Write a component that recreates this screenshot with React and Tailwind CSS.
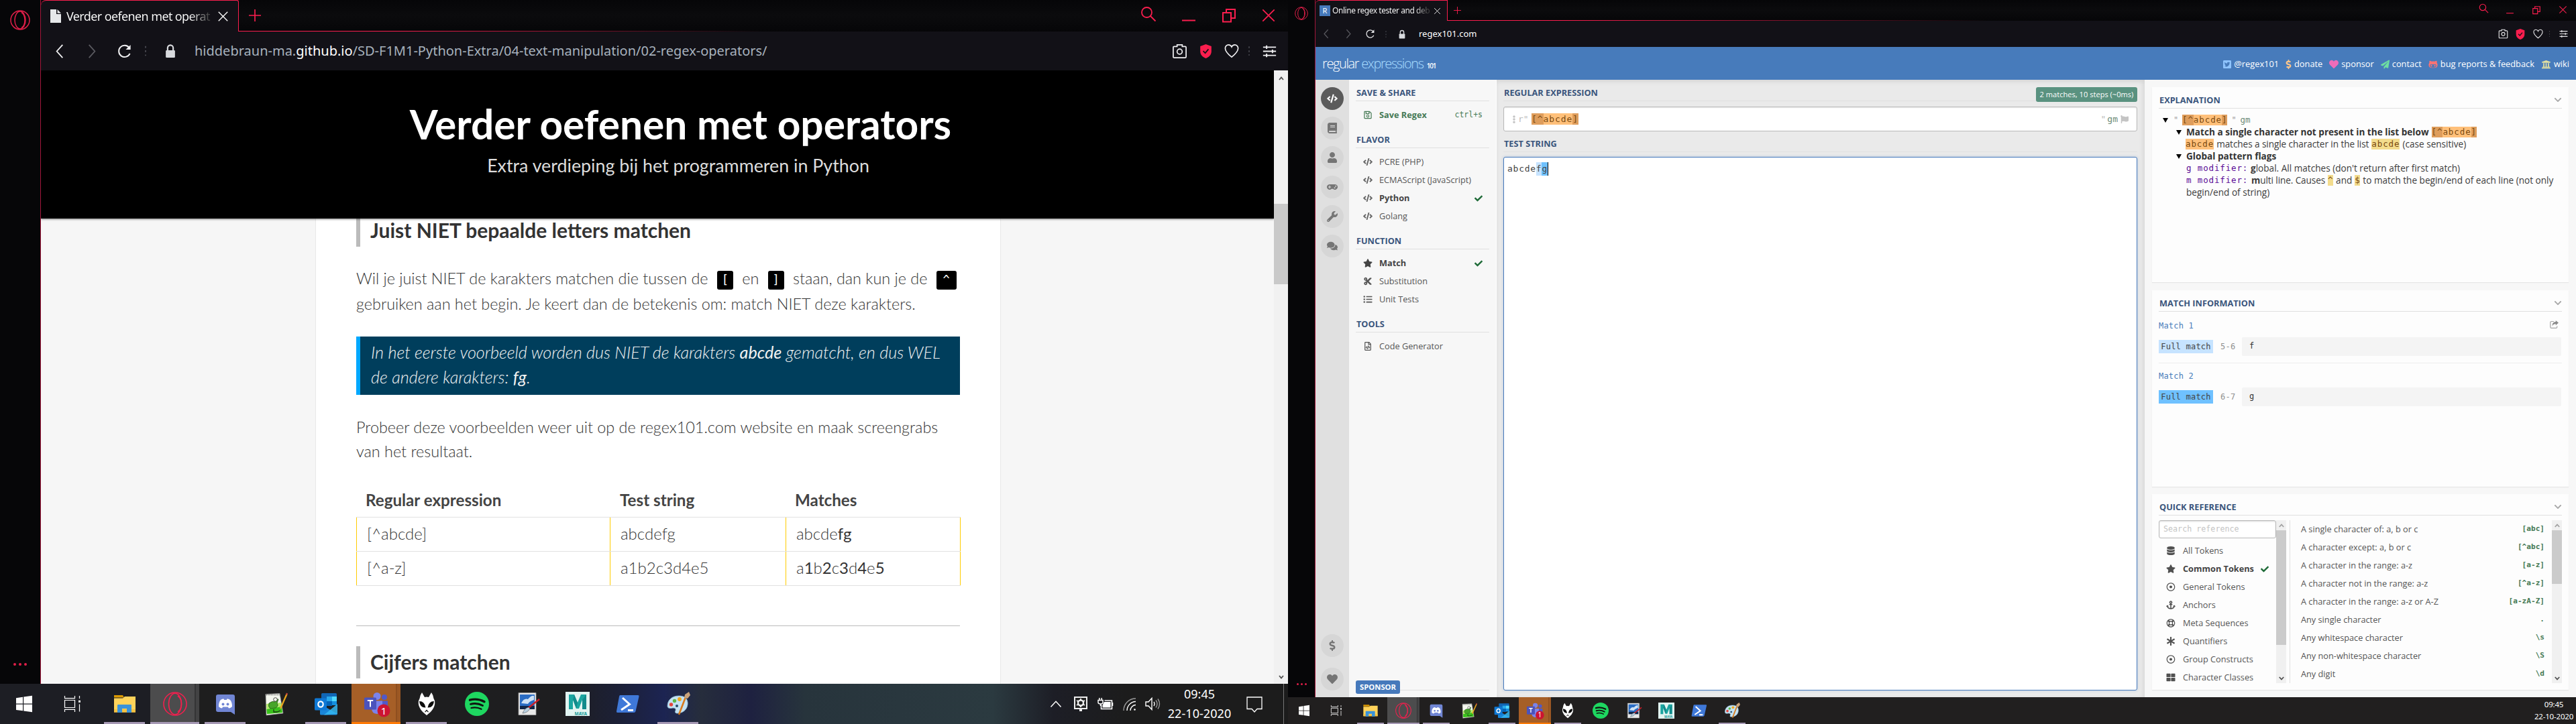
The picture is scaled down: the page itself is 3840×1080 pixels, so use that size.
import React from "react";
import {
  FaCode, FaBook, FaUser, FaGamepad, FaWrench, FaComments, FaDollarSign, FaHeart, FaStar, FaCut,
  FaListUl, FaCheck, FaDatabase, FaAnchor, FaRegDotCircle, FaRegLifeRing, FaAsterisk, FaThLarge,
  FaRegSave, FaRegFileCode, FaTwitterSquare, FaPaperPlane, FaUniversity, FaFlag,
  FaEllipsisV, FaChevronDown, FaGithubAlt,
} from "react-icons/fa";

const UI = "font-['Noto_Sans','Open_Sans',sans-serif]";
const MONO = "font-['DejaVu_Sans_Mono','Liberation_Mono',monospace]";

/* ---------- browser chrome icons ---------- */

const Svg = ({ className, box = 24, children, sw = 1.5, color = "currentColor" }) => (
  <svg className={`shrink-0 ${className}`} viewBox={`0 0 ${box} ${box}`} fill="none" stroke={color} strokeWidth={sw}>
    {children}
  </svg>
);

const OperaOutline = ({ className }) => (
  <Svg className={className} box={30} color="#e01f49" sw={1.5}>
    <ellipse cx="15" cy="15" rx="14" ry="14" />
    <ellipse cx="15" cy="15" rx="8" ry="13" />
    <path d="M17 3.500c3.500 2 5 6 5 11.500s-1.500 9.500-5 11.500" />
  </Svg>
);
const Back = ({ className }) => (
  <Svg className={className} sw={1.9}><path d="M17 2 8 12l9 10" /></Svg>
);
const Forward = ({ className }) => (
  <Svg className={className} sw={1.9}><path d="M7 2l9 10-9 10" /></Svg>
);
const Reload = ({ className }) => (
  <Svg className={className} sw={2.1}>
    <path d="M20.500 15.500A9 9 0 1 1 19.500 6.500" />
    <path d="M21.500 2v7.500H14z" fill="currentColor" stroke="none" />
  </Svg>
);
const Dots = ({ className }) => (
  <Svg className={className} color="#4a4a52"><path d="M12 4v16" strokeDasharray="3 4" strokeWidth="2" /></Svg>
);
const Lock = ({ className }) => (
  <Svg className={className} sw={2.4} color="#d8dade">
    <path d="M7.500 12V7a4.500 4.500 0 0 1 9 0v5" />
    <rect x="4.500" y="11" width="15" height="12" rx="1.500" fill="#d8dade" stroke="none" />
  </Svg>
);
const Search = ({ className }) => (
  <Svg className={className} sw={1.8}><circle cx="9.500" cy="9.500" r="7.500" /><path d="M15 15l7.500 7.500" /></Svg>
);
const Minimize = ({ className }) => (
  <Svg className={className} sw={2}><path d="M2 21.500h20" /></Svg>
);
const Restore = ({ className }) => (
  <Svg className={className} sw={2}><path d="M3 8h12v13.500H3zM8 8V3h13v13h-6" /></Svg>
);
const Close = ({ className }) => (
  <Svg className={className} sw={1.9}><path d="M2.500 2.500l19 19M21.500 2.500l-19 19" /></Svg>
);
const Camera = ({ className }) => (
  <Svg className={className} sw={1.8}>
    <path d="M8 4.500V2h8v2.500h4.500q1.500 0 1.500 1.500v14.500q0 1.500-1.500 1.500h-17Q2 22 2 20.500V6q0-1.500 1.500-1.500z" />
    <circle cx="12" cy="12.500" r="4" />
  </Svg>
);
const Shield = ({ className }) => (
  <Svg className={className} sw={2}>
    <path d="M12 0l9.500 3.500V12c0 6-4 10-9.500 12C6.500 22 2.500 18 2.500 12V3.500z" fill="#fa1e4e" stroke="none" />
    <path d="M7.500 11.500l3.500 3.500 5.500-6.500" stroke="#121117" />
  </Svg>
);
const HeartLine = ({ className }) => (
  <Svg className={className} sw={1.8}>
    <path d="M12 22C6 17 1.500 12.500 1.500 7.500 1.500 4.500 4 2 6.800 2 9 2 11 3 12 5.500 13 3 15 2 17.200 2 20 2 22.500 4.500 22.500 7.500c0 5-4.500 9.500-10.500 14.500z" />
  </Svg>
);
const Sliders = ({ className }) => (
  <Svg className={className} sw={2.2}>
    <path d="M1 5h22M1 12h22M1 19h22M7 2v6M17 9v6M7 16v6" />
  </Svg>
);

/* ---------- taskbar icons ---------- */

const I = ({ className, children }) => (
  <svg className={`shrink-0 overflow-visible ${className}`} viewBox="0 0 36 36" fill="none">{children}</svg>
);
const WinLogo = (p) => (
  <I {...p}><path fill="#fff" d="M6 9.200 16 7.800v9.700H6zM17.200 7.600 30 5.800v11.700H17.200zM6 18.700h10v9.600L6 27zM17.200 18.700H30V30.200l-12.800-1.800z" /></I>
);
const TaskView = (p) => (
  <I {...p}>
    <path stroke="#fff" strokeWidth="1.200" d="M6.500 6v3.600h15V6M6.500 12.500h15v11h-15zM6.500 30v-3.600h15V30M28.500 6v4M28.500 18.500v11" />
    <path fill="#fff" d="M27 12.800h3v3h-3z" />
  </I>
);
const Folder = (p) => (
  <I {...p}>
    <path fill="#dd9a00" d="M2 5h13l2 3.500H2z" />
    <path fill="#ffd35a" d="M2 9.500h13l3-2.500h16v23.500H2z" />
    <path fill="#f7c241" d="M2 26h32v4.500H2z" />
    <path fill="#3a93da" d="M7 31V20q0-1 1-1h19q1 0 1 1v11h-7v-6h-7v6z" />
  </I>
);
const OperaGX = (p) => (
  <I {...p}>
    <g stroke="#f0204e" strokeWidth="1.600">
      <circle cx="18" cy="18" r="17" />
      <ellipse cx="18" cy="18" rx="9.500" ry="15.800" />
      <path d="M22 6c4 3 5.500 7 5.500 12S26 27 22 30" />
    </g>
  </I>
);
const Discord = (p) => (
  <I {...p}>
    <path fill="#7186d4" d="M7 4h22q3 0 3 3v27l-6-4H7q-3 0-3-3V7q0-3 3-3z" />
    <path fill="#fff" d="M8 22c0-5 1-8 3-10 2-1 3-1.300 4.500-1.400l.7 1.300h3.600l.7-1.300c1.500.1 2.500.4 4.500 1.400 2 2 3 5 3 10-1.500 1.800-3 2.300-5 2.500l-1.200-2H14.200l-1.200 2c-2-.2-3.500-.7-5-2.500z" />
    <circle cx="14.500" cy="18.500" r="2" fill="#7186d4" /><circle cx="21.500" cy="18.500" r="2" fill="#7186d4" />
  </I>
);
const NotepadPP = (p) => (
  <I {...p}>
    <path fill="#f4f6ee" stroke="#8a8a8a" strokeWidth=".7" d="M3 3.500l21-1 5 29.500-25 3z" />
    <path stroke="#555" strokeWidth="1.500" strokeDasharray="1 1.300" d="M4 4.500h20" />
    <path fill="#b4ea6c" d="M4 18l22-2 2 15-23 2z" />
    <path fill="#39c21c" d="M4.500 26l22.500-4 1 9-23 2z" />
    <path fill="#47a52a" stroke="#1c4c10" strokeWidth=".7" d="M8 17q5-4 9-2l2-4h3l-2 6q3 4-2 7l-8 1q-4-3-2-8z" />
    <circle cx="17.500" cy="11.500" r="2.800" fill="#f4f6ee" stroke="#222" strokeWidth=".8" />
    <path stroke="#1b3c12" strokeWidth="1.300" d="M15 26v4h5l5-2" />
    <path stroke="#e8a51c" strokeWidth="2.300" d="M34.500 3.500 25 25" /><path stroke="#c4443a" strokeWidth="2.300" d="M35 2l-1 2.500" />
  </I>
);
const Outlook = (p) => (
  <I {...p}>
    <path fill="#1066b5" d="M11 3.500q0-1.500 1.500-1.500h20q1.500 0 1.500 1.500V20H11z" />
    <path fill="#28a8ea" d="M19 7h8v7h-8z" /><path fill="#50d9ff" d="M27 7h7v7h-7z" />
    <path fill="#0364b8" d="M19 14h8v7h-8z" /><path fill="#1490df" d="M27 14h7v6h-7z" />
    <path fill="#1a86d9" d="M9 18l26 15q-.5 1.500-2 1.500H10.500Q9 34.500 9 33z" />
    <path fill="#35b8f1" d="M35 18v15L15 34.500z" opacity=".85" />
    <rect x="1" y="9.500" width="18" height="18" rx="1.500" fill="#0f78d4" />
    <ellipse cx="10" cy="18.500" rx="3.700" ry="4.200" stroke="#fff" strokeWidth="2.200" />
  </I>
);
const Teams = (p) => (
  <I {...p}>
    <circle cx="19" cy="6.500" r="5.500" fill="#7b83eb" /><circle cx="30" cy="8" r="4" fill="#5059c9" />
    <path fill="#5059c9" d="M24 13.500h11v9q0 5-6 5.500z" />
    <path fill="#7b83eb" d="M11 13.500h16v11q0 8-8 8.500-8-.5-8-8.500z" />
    <rect x="0" y="8.500" width="18" height="18" rx="1.500" fill="#4b53bc" />
    <path stroke="#fff" strokeWidth="2" d="M4.800 13h8.400M9 13v9.500" />
    <circle cx="29" cy="28" r="9.500" fill="#cc1432" />
    <text x="29" y="33.500" fontSize="15" fill="#fff" textAnchor="middle" fontFamily="Noto Sans, sans-serif">1</text>
  </I>
);
const Foobar = (p) => (
  <I {...p}>
    <path fill="#fff" d="M11 1l4 7q3-1 6 0l4-7q3 4 3.500 9 3 5 1 11-2.500 7-8 11L18 35l-3.500-3Q9 28 6.500 21q-2-6 1-11Q8 5 11 1z" />
    <path fill="#0c0c0c" d="M7 14q8 0 9.500 9.500Q8 24 7 14zM29 14q-8 0-9.500 9.500Q28 24 29 14zM15 30l3-3.500 3 3.500-1 .5-2-2-2 2z" />
  </I>
);
const Spotify = (p) => (
  <I {...p}>
    <circle cx="18" cy="18" r="18" fill="#1ed760" />
    <path stroke="#101410" strokeLinecap="round" strokeWidth="3.400" d="M7.500 12.200q11-3 21.500 2.500" />
    <path stroke="#101410" strokeLinecap="round" strokeWidth="2.900" d="M8.500 18.300q9.500-2.500 18 2.200" />
    <path stroke="#101410" strokeLinecap="round" strokeWidth="2.300" d="M9.500 24q8-2 15 1.800" />
  </I>
);
const PaintNet = (p) => (
  <I {...p}>
    <path fill="#e8e8e8" stroke="#9a9a9a" strokeWidth=".8" d="M5 1.500h26v33H5z" />
    <path fill="#2a6cc4" d="M7 4h22v17H7z" /><path fill="#cfe2f5" d="M9 17q4-8 10-6 5-6 9-5v6q-7 2-9 6z" />
    <path fill="#102648" d="M7 21h22v5H7z" />
    <path stroke="#c81e28" strokeWidth="2.400" d="M36 11 19 24.500" /><path fill="#b8cfe0" stroke="#555" strokeWidth=".6" d="M20 23q-6 1-9 9 8-1 11-7z" />
  </I>
);
const Maya = (p) => (
  <I {...p}>
    <path fill="#e2f4f1" d="M0 0h36v36H0z" />
    <path fill="#1aa5a0" d="M5 4h8l5 12 5-12h8v22h-6V12l-5 13h-4l-5-13v14H5z" />
    <path fill="#0c7c7e" d="M13 4l5 12-2 9-5-13zM31 4v22h-6V12z" opacity=".6" />
    <text x="32" y="34.500" fontSize="6.500" fontWeight="700" fill="#159a98" textAnchor="end" fontFamily="Noto Sans, sans-serif">MAYA</text>
  </I>
);
const PowerShell = (p) => (
  <I {...p}>
    <path fill="#3f78d8" d="M6.500 5H33q2 0 1.500 2l-5 22q-.5 2-2.500 2H2.500Q.5 31 1 29l4-22q.4-2 1.500-2z" />
    <path stroke="#fff" strokeWidth="3" d="M10 9l10.500 9.500L8 27M18 27.500h8" />
  </I>
);
const Paint = (p) => (
  <I {...p}>
    <path fill="#c4e2f2" stroke="#8ab8d4" strokeWidth=".8" d="M19 6c9 0 14 5 13 13-1 9-9 13-15 13-4 0-4-2-3-4 1-3-1-4-4-4-4 1-8 1-8-3C2 12 9 6 19 6z" />
    <circle cx="7.500" cy="19" r="2.700" fill="#e2453c" /><circle cx="12.500" cy="13.500" r="2.700" fill="#5fb947" />
    <circle cx="20" cy="11" r="2.900" fill="#f0a820" /><circle cx="16" cy="21" r="2" fill="#24486a" />
    <path stroke="#d87a1c" strokeWidth="2.600" d="M29 8 19 34" /><path fill="#c9a27a" d="M27 9l1-5 6-4 2 5-4 5z" />
  </I>
);

const TASKS = [
  { Icon: Folder, state: "open" },
  { Icon: OperaGX, state: "active" },
  { Icon: Discord, state: "open" },
  { Icon: NotepadPP },
  { Icon: Outlook, state: "open" },
  { Icon: Teams, state: "alert" },
  { Icon: Foobar, state: "open" },
  { Icon: Spotify },
  { Icon: PaintNet },
  { Icon: Maya },
  { Icon: PowerShell },
  { Icon: Paint, state: "open" },
];

function TaskButton({ Icon, state, big }) {
  const bg =
    state === "active" ? "bg-[linear-gradient(90deg,#4c4c4d_91%,#343435_91%,#343435_93%,#434344_93%)]"
    : state === "alert" ? "bg-[linear-gradient(90deg,#a65f27_91%,#8f4f1f_91%,#8f4f1f_93%,#9c5824_93%)]" : "";
  const full = state === "active" || state === "alert";
  const bar = state === "alert" ? "bg-[#ff7a05]" : state ? "bg-[#a699b5]" : "bg-transparent";
  const barW = full ? "w-full" : big ? "w-[61px]" : "w-10";
  return (
    <div className={big ? "w-[75px] px-px h-full" : "w-[49px] pl-px h-full"}>
      <div className={`h-full flex flex-col items-center ${bg}`}>
        <div className="flex-1 flex items-center">
          <Icon className={big ? "size-9 mt-[3px]" : "size-6 mt-[2px]"} />
        </div>
        <div className={`${barW} ${bar} ${big ? "h-[3px]" : "h-[2px]"}`} />
      </div>
    </div>
  );
}

function TaskIcons({ big }) {
  const cell = big ? "w-[72px] flex justify-center" : "w-12 flex justify-center";
  const size = big ? "size-9" : "size-6";
  return (
    <div className="flex h-full items-center">
      <div className={cell}><WinLogo className={size} /></div>
      <div className={cell}><TaskView className={size} /></div>
      <div className={big ? "flex h-full pl-1" : "flex h-full pl-0.5"}>
        {TASKS.map((t, i) => <TaskButton key={i} {...t} big={big} />)}
      </div>
    </div>
  );
}

/* ---------- left monitor ---------- */

function Code({ wide, children }) {
  return (
    <span className={`inline-block ${wide ? "w-[30px]" : "w-6"} h-7 mx-[7px] rounded-[3px] bg-black text-white text-center align-[1.5px] text-[17px] leading-[27px] ${MONO}`}>
      {children}
    </span>
  );
}

function H2({ children, className = "" }) {
  return (
    <h2 className={`h-12 leading-[47px] border-l-[6px] border-[#bbb] pl-[15px] text-[30px] font-bold text-[#333] whitespace-nowrap ${className}`}>
      {children}
    </h2>
  );
}

function LeftArticle() {
  const row = "grid grid-cols-[378px_262px_261px] h-[51px] border-t border-[#e1e1e1] text-2xl leading-[48px]";
  const td = "border-l border-[#ffcc00] pl-[15px]";
  return (
    <article className="w-[1022px] h-full bg-white border-x border-[#e9e9e9] px-[60px] text-[#333] font-light text-[23.4px] whitespace-nowrap">
      <H2 className="-mt-[6px]">Juist NIET bepaalde letters matchen</H2>
      <p className="mt-[29px] leading-[37.5px]">
        <span className="block h-[37.5px]">
          Wil je juist NIET de karakters matchen die tussen de <Code>[</Code> en <Code>]</Code> staan, dan kun je de <Code wide>^</Code>
        </span>
        gebruiken aan het begin. Je keert dan de betekenis om: match NIET deze karakters.
      </p>
      <blockquote className="mt-[30px] h-[87px] w-[900px] border-l-[6px] border-[#00a8ff] bg-[#003e5c] pl-4 pt-[5px] text-[25.2px] leading-[37px] italic text-[#f2f2f2]">
        In het eerste voorbeeld worden dus NIET de karakters <b>abcde</b> gematcht, en dus WEL<br />
        de andere karakters: <b>fg</b>.
      </blockquote>
      <p className="mt-[29.5px] leading-[36.3px]">
        Probeer deze voorbeelden weer uit op de regex101.com website en maak screengrabs<br />
        van het resultaat.
      </p>
      <div className="mt-[32px] w-[901px]">
        <div className="grid grid-cols-[378px_262px_261px] h-12 leading-[46px] text-[24.2px] font-bold text-[#444]">
          <div className="pl-[14px]">Regular expression</div>
          <div className="pl-[15px]">Test string</div>
          <div className="pl-[14px]">Matches</div>
        </div>
        <div className={row}>
          <div className={td}>[^abcde]</div>
          <div className={td}>abcdefg</div>
          <div className={`${td} border-r`}>abcde<b>fg</b></div>
        </div>
        <div className={row}>
          <div className={td}>[^a-z]</div>
          <div className={td}>a1b2c3d4e5</div>
          <div className={`${td} border-r`}>a<b>1</b>b<b>2</b>c<b>3</b>d<b>4</b>e<b>5</b></div>
        </div>
        <div className="h-px bg-[#e1e1e1]" />
      </div>
      <div className="mt-[59px] h-px w-[900px] bg-[#bbb]" />
      <H2 className="mt-[30px]">Cijfers matchen</H2>
    </article>
  );
}

function LeftMonitor() {
  return (
    <section className="w-[1920px] h-[1080px] flex flex-col">
      <div className="flex h-[1020px] bg-[#060608]">
        <aside className="w-[61px] shrink-0 border-r border-[#a1163a] flex flex-col items-center justify-between pt-[15px] pb-[27px]">
          <OperaOutline className="size-[30px]" />
          <div className="flex gap-1">
            <i className="size-1 rounded-full bg-[#e01f49]" /><i className="size-1 rounded-full bg-[#e01f49]" /><i className="size-1 rounded-full bg-[#e01f49]" />
          </div>
        </aside>
        <div className="flex-1 flex flex-col">
          <header className="flex h-[47px] bg-[linear-gradient(180deg,#060608,#0b0b0d_50%,#060608)]">
            <div className="w-[295px] h-full bg-[#121117] border-t border-r border-[#fa1e4e] rounded-tl-lg rounded-tr-[3px] flex items-center pl-[14px]">
              <svg className="w-4 h-5 shrink-0" viewBox="0 0 16 20"><path fill="#e6e8ea" d="M0 0h9v7h7v13H0zM10.500 0L16 5.700h-5.500z" /></svg>
              <div className={`ml-[8px] w-[216px] text-lg tracking-[-0.62px] whitespace-nowrap overflow-hidden text-transparent bg-clip-text bg-[linear-gradient(90deg,#fff_85%,#444_98%)] ${UI}`}>
                Verder oefenen met operat
              </div>
              <Close className="size-[17px] ml-[9px] text-white" />
            </div>
            <div className="flex-1 flex flex-col">
              <div className="h-[46px] flex items-center text-[#fa1e4e]">
                <Svg className="size-[18px] ml-[15px]" sw={2.2}><path d="M12 0v24M0 12h24" /></Svg>
                <div className="ml-auto flex gap-[36px] pr-[18px]">
                  <Search className="size-6 -mt-[2px]" />
                  <Minimize className="size-6 -mt-[2px]" />
                  <Restore className="size-6" />
                  <Close className="size-[22px] mt-px" />
                </div>
              </div>
              <div className="h-px bg-[linear-gradient(90deg,#fa1e4e,#fa1e4e_15%,transparent_50%)]" />
            </div>
          </header>
          <nav className="h-[58px] bg-[#121117] flex items-center text-[#f0f0f2]">
            <Back className="size-[23px] ml-4" />
            <Forward className="size-[23px] ml-[26px] text-[#5a5a60]" />
            <Reload className="size-[23px] ml-[25px]" />
            <Dots className="size-[22px] ml-[9px]" />
            <Lock className="size-[22px] ml-[15px]" />
            <div className={`ml-[25px] text-xl text-[#a7b1bd] ${UI}`}>
              hiddebraun-ma.<span className="text-white">github.io</span>/SD-F1M1-Python-Extra/04-text-manipulation/02-regex-operators/
            </div>
            <div className="ml-auto flex items-center pr-[17px]">
              <Camera className="size-[23px]" />
              <Shield className="size-[21px] ml-[17px]" />
              <HeartLine className="size-[22px] ml-[17px]" />
              <Dots className="size-[20px] ml-[5px]" />
              <Sliders className="size-[21px] ml-[10px]" />
            </div>
          </nav>
          <div className="flex h-[915px] font-[Lato,sans-serif]">
            <div className="w-[1838px] h-full flex flex-col overflow-hidden bg-[#f6f6f6]">
              <div className="h-[221px] shrink-0 bg-black text-white text-center pt-11 pl-[69px] shadow-[0_1px_3px_rgba(0,0,0,0.5)] z-10">
                <h1 className="text-[60.4px] leading-[72px] font-bold">Verder oefenen met operators</h1>
                <p className="mt-[9px] -ml-[7px] text-[26.8px] leading-[34px] text-[#ddd]">Extra verdieping bij het programmeren in Python</p>
              </div>
              <div className="h-[694px] overflow-hidden flex justify-center pl-[2px]"><LeftArticle /></div>
            </div>
            <div className="w-[21px] bg-[#f1f1f1] flex flex-col items-center">
              <svg className="size-2 mt-[8px]" viewBox="0 0 8 8" fill="none" stroke="#505050" strokeWidth="1.800"><path d="M1 6l3-3.500L7 6" /></svg>
              <div className="mt-[183px] w-full h-[120px] bg-[#c9c9c9]" />
              <svg className="size-2 mt-auto mb-[6px]" viewBox="0 0 8 8" fill="none" stroke="#505050" strokeWidth="1.800"><path d="M1 2l3 3.500L7 2" /></svg>
            </div>
          </div>
        </div>
      </div>
      <footer className="h-[60px] flex justify-between bg-[linear-gradient(90deg,#1d1e24_0,#1d1e24_220px,#1e1e1e_300px,#1e1e20_840px,#1c2036_920px,#1c2452_990px,#262d3c_1045px,#1e2140_1120px,#27343c_1200px,#2b3a40_1480px,#1d1e26_1570px,#1c1c1c_1680px)]">
        <TaskIcons big />
        <div className="flex items-center text-white">
          <Svg className="size-[18px]" sw={2}><path d="M2 18 12 7l10 11" /></Svg>
          <svg className="w-[22px] h-[22px] ml-[17px]" viewBox="0 0 22 22" fill="none">
            <path fill="#eee" d="M1 0h20v19h-8v3H9v-3H1z" />
            <path fill="#222" d="M3 2h16v15H3z" />
            <circle cx="11" cy="9.500" r="4" stroke="#eee" strokeWidth="2.400" />
            <path stroke="#eee" strokeWidth="2" d="M11 3v3M11 13v3M5 6l2.800 1.700M14.200 11.300l2.800 1.700M5 13l2.800-1.700M14.200 7.700 17 6" />
          </svg>
          <svg className="w-6 h-[18px] ml-[14px]" viewBox="0 0 24 18" fill="none" stroke="#fff" strokeWidth="1.500">
            <path d="M5.500 10v6.500h16V4h-11M22.500 7v5M1 3.500h7V7Q8 9 4.500 9T1 7zM2.800 0v3M6.200 0v3M4.500 9v3" /><path fill="#fff" stroke="none" d="M10 6h9.500v8.500H7.500V11z" />
          </svg>
          <svg className="size-[21px] ml-[14px]" viewBox="0 0 21 21" fill="none" stroke="#fff" strokeWidth="1.400">
            <path stroke="#999" d="M1 20A18 18 0 0 1 19 2" /><path d="M6 20A13.500 13.500 0 0 1 19 6.500M11 20a8.500 8.500 0 0 1 8-8.500" /><circle cx="17.500" cy="18.500" r="1.300" fill="#fff" stroke="none" />
          </svg>
          <svg className="w-[23px] h-[20px] ml-[12px]" viewBox="0 0 23 20" fill="none" stroke="#fff" strokeWidth="1.400">
            <path d="M1 7h4l5-5.500v17L5 13H1zM13 7q2 3 0 6" /><path stroke="#999" d="M16 4.500q4 5.500 0 11M19 2.500q5 7.500 0 15" />
          </svg>
          <div className={`w-[104px] ml-[6px] text-center text-lg leading-[29px] ${UI}`}><div>09:45</div><div className="tracking-[0.05px]">22-10-2020</div></div>
          <svg className="w-6 h-6 ml-[18px] mt-px" viewBox="0 0 24 24" fill="none" stroke="#fff" strokeWidth="1.300"><path d="M1 1h22v17.500h-7L12 23l-4-4.500H1z" /></svg>
          <div className="ml-[31px] mr-[6px] w-px h-[60px] bg-[#777]" />
        </div>
      </footer>
    </section>
  );
}

/* ---------- right monitor ---------- */

function Heading({ children, chevron, className = "h-8 pt-[7px]" }) {
  return (
    <div className={`flex justify-between items-start leading-6 border-b border-[#e0e0e0] text-[12.74px] font-bold text-[#3a557c] whitespace-nowrap ${className}`}>
      <span className="pl-px">{children}</span>
      {chevron && <FaChevronDown className="size-3 mt-[6px] text-[#a9a9a9]" />}
    </div>
  );
}

function Menu({ title, items }) {
  return (
    <div className="pb-[3px]">
      <Heading>{title}</Heading>
      <ul className="pt-[7px] pb-px">
        {items.map(({ Icon, label, on, save }) => (
          <li key={label} className={`h-[27px] flex items-center pl-[11px] pr-[10px] text-[12.74px] whitespace-nowrap ${save ? "font-bold text-[#467a55]" : on ? "font-bold text-[#444]" : "text-[#555]"}`}>
            <Icon className={`w-[14px] h-[13px] shrink-0 ${Icon === FaCode ? "text-[#666]" : ""}`} />
            <span className="ml-[10px]">{label}</span>
            {on && <FaCheck className="ml-auto size-3 text-[#1f6b38]" />}
            {save && <span className={`ml-auto font-normal text-[11.5px] ${MONO}`}>ctrl+s</span>}
          </li>
        ))}
      </ul>
    </div>
  );
}

const Round = ({ Icon, dark }) => (
  <div className={`size-[34px] rounded-full flex items-center justify-center ${dark ? "bg-[#5b5b5b] text-white" : "bg-[#d6d6d6] text-[#757575]"}`}>
    <Icon className="size-4" />
  </div>
);

const Hl = ({ children, tone = "bg-[#ffc07a]", className = "" }) => (
  <span className={`inline-block h-4 leading-4 align-baseline text-[12.5px] tracking-[0.9px] text-[#7a4a10] ${tone} ${MONO} ${className}`}>{children}</span>
);
const CharClass = ({ className }) => (
  <Hl className={className}>
    <span className="inline-block h-full bg-[#de9d5c]">[^</span>abcde<span className="inline-block h-full bg-[#de9d5c]">]</span>
  </Hl>
);
const Tri = () => <span className="inline-block w-0 h-0 border-x-[4px] border-t-[7px] border-x-transparent border-t-black" />;

const Share = () => (
  <svg className="w-[13px] h-3 mr-[5px]" viewBox="0 0 13 12" fill="none">
    <path stroke="#a5a5a5" strokeWidth="1.200" d="M6 1.500H2.500Q.8 1.500.8 3.200v6.500q0 1.600 1.700 1.600h6.700q1.600 0 1.600-1.600V8.500" />
    <path fill="#8a8a8a" d="M8.800 0 13 3.600 8.800 7.200V5.200Q5 5 3.800 8.500 3 2.300 8.800 2z" />
  </svg>
);

const LEFT_REF = [
  [FaDatabase, "All Tokens"], [FaStar, "Common Tokens", true], [FaRegDotCircle, "General Tokens"], [FaAnchor, "Anchors"],
  [FaRegLifeRing, "Meta Sequences"], [FaAsterisk, "Quantifiers"], [FaRegDotCircle, "Group Constructs"], [FaThLarge, "Character Classes"],
];
const RIGHT_REF = [
  ["A single character of: a, b or c", "[abc]"], ["A character except: a, b or c", "[^abc]"], ["A character in the range: a-z", "[a-z]"],
  ["A character not in the range: a-z", "[^a-z]"], ["A character in the range: a-z or A-Z", "[a-zA-Z]"], ["Any single character", "."],
  ["Any whitespace character", "\\s"], ["Any non-whitespace character", "\\S"], ["Any digit", "\\d"],
];

function Scroll({ thumb }) {
  return (
    <div className="w-[15px] shrink-0 h-[243px] bg-[#f0f0f0] flex flex-col items-center">
      <svg className="size-2 my-[3.5px]" viewBox="0 0 8 8" fill="none" stroke="#a0a0a0" strokeWidth="1.800"><path d="M.8 6 4 2.500 7.200 6" /></svg>
      <div className={`w-full bg-[#cbcbcb] ${thumb}`} />
      <svg className="size-2 mt-auto mb-[3px]" viewBox="0 0 8 8" fill="none" stroke="#505050" strokeWidth="1.800"><path d="M.8 2 4 5.500 7.200 2" /></svg>
    </div>
  );
}

const Panel = ({ title, className, children }) => (
  <div className={`w-[621px] px-[10px] bg-[#fdfdfd] shadow-[0_1px_1px_rgba(0,0,0,0.07)] overflow-hidden ${className}`}>
    <Heading chevron>{title}</Heading>
    {children}
  </div>
);

function MatchRow({ n, tone, range, value, share, last }) {
  return (
    <div className={`text-xs ${MONO} ${last ? "" : "border-b border-[#eee] mt-[2px] h-[75px]"}`}>
      <div className="h-9 pt-[11px] leading-4 flex justify-between text-[#4a7dbb] tracking-[0.2px]">
        <span>Match {n}</span>
        {share && <Share />}
      </div>
      <div className="flex h-7 items-center tracking-[0.23px]">
        <span className={`w-[81px] h-5 leading-5 text-center text-[#444] ${tone}`}>Full match</span>
        <span className="ml-[11px] w-[32px] text-[#909090]">{range}</span>
        <span className="w-[476px] h-7 leading-[27px] bg-[#f4f4f4] rounded-[2px] pl-[11px] text-[#333]">{value}</span>
      </div>
    </div>
  );
}

function RightColumn() {
  return (
    <div className="w-[643px] h-full bg-[#f7f7f7] pl-[11px] pt-[11px] flex flex-col">
      <Panel title="EXPLANATION" className="h-[291px]">
        <div className="pt-2 text-[13.6px] leading-[18px] text-[#3c3c3c] whitespace-nowrap">
          <div className="h-[18px] flex items-center pl-[6px]">
            <Tri /><span className={`ml-[8px] w-[13px] text-xs text-[#999] ${MONO}`}>"</span>
            <CharClass /><span className={`ml-[6px] w-[13px] text-xs text-[#999] ${MONO}`}>"</span>
            <span className={`text-[12.5px] text-[#6b8a76] ${MONO}`}>gm</span>
          </div>
          <div className="h-[18px] flex items-center pl-[26px]">
            <Tri /><b className="ml-[7px] mr-[4px] text-[#333]">Match a single character not present in the list below</b><CharClass />
          </div>
          <div className="h-[18px] flex items-center pl-[40px]">
            <Hl>abcde</Hl><span className="mx-1 tracking-[-0.08px]">matches a single character in the list</span>
            <Hl tone="bg-[#f3dc8d]">abcde</Hl><span className="ml-1">(case sensitive)</span>
          </div>
          <div className="h-[18px] flex items-center pl-[26px]"><Tri /><b className="ml-[7px] text-[#333]">Global pattern flags</b></div>
          <div className="h-[18px] flex items-center pl-[41px]">
            <span className={`w-[96px] text-[12.5px] tracking-[0.85px] text-[#5a0a96] ${MONO}`}>g modifier:</span>
            <span><b>g</b>lobal. All matches (don't return after first match)</span>
          </div>
          <div className="h-[18px] flex items-center pl-[41px]">
            <span className={`w-[97px] text-[12.5px] tracking-[0.85px] text-[#5a0a96] ${MONO}`}>m modifier:</span>
            <span className="tracking-[-0.1px]"><b>m</b>ulti line. Causes</span>
            <Hl tone="bg-[#f3dc8d]" className="mx-1 w-2">^</Hl><span>and</span>
            <Hl tone="bg-[#f3dc8d]" className="mx-1 w-2">$</Hl><span>to match the begin/end of each line (not only</span>
          </div>
          <div className="h-[18px] pl-[41px]">begin/end of string)</div>
        </div>
      </Panel>
      <Panel title="MATCH INFORMATION" className="mt-3 h-[293px]">
        <MatchRow n="1" tone="bg-[#c6e3ff]" range="5-6" value="f" share />
        <MatchRow n="2" tone="bg-[#6fc1ff]" range="6-7" value="g" last />
      </Panel>
      <Panel title="QUICK REFERENCE" className="mt-[11px] h-[292px]">
        <div className="mt-[7px] flex h-[243px] overflow-hidden text-[12.74px] text-[#555]">
          <div className="w-[175px] shrink-0">
            <div className={`h-[27px] rounded-[3px] border border-[#b9b9b9] bg-white shadow-[inset_0_1px_2px_rgba(0,0,0,0.15)] pl-[6px] leading-[25px] text-[11.7px] text-[#c4c4c4] ${MONO}`}>Search reference</div>
            <ul className="mt-[5px]">
              {LEFT_REF.map(([Icon, label, on]) => (
                <li key={label} className={`h-[27px] flex items-center pl-[11px] pr-[11px] whitespace-nowrap ${on ? "font-bold text-[#444]" : ""}`}>
                  <Icon className="w-[14px] h-[13px] shrink-0 text-[#505050]" /><span className="ml-[11px]">{label}</span>
                  {on && <FaCheck className="ml-auto size-3 text-[#1f6b38]" />}
                </li>
              ))}
            </ul>
          </div>
          <Scroll thumb="h-[171px]" />
          <ul className="ml-[5px] flex-1 border-l border-[#e0e0e0] pl-4 pr-[11px]">
            {RIGHT_REF.map(([label, code]) => (
              <li key={label} className="h-[27px] flex items-center justify-between whitespace-nowrap">
                <span>{label}</span><span className={`text-[11.1px] font-bold text-[#467a55] ${MONO}`}>{code}</span>
              </li>
            ))}
          </ul>
          <Scroll thumb="h-[80px]" />
        </div>
      </Panel>
    </div>
  );
}

const LINKS = [
  [FaTwitterSquare, "@regex101", "text-[#8fc4ff]", "w-3"], [FaDollarSign, "donate", "text-[#ffc68a]", "w-[9px]"],
  [FaHeart, "sponsor", "text-[#ee6cb9]", "w-[14px]"], [FaPaperPlane, "contact", "text-[#6fe0a0]", "w-[13px]"],
  [FaGithubAlt, "bug reports & feedback", "text-[#ff7272]", "w-[14px]"], [FaUniversity, "wiki", "text-[#e2e0a0]", "w-[15px]"],
];

function RightMonitor() {
  return (
    <section className="w-[1920px] h-[1080px] flex flex-col">
      <div className="flex h-[1040px] bg-[#060608]">
        <aside className="w-[41px] shrink-0 border-r border-[#a1163a] flex flex-col items-center justify-between pt-[10px] pb-[18px]">
          <OperaOutline className="size-5" />
          <div className="flex gap-[3px]">
            <i className="size-[3px] rounded-full bg-[#e01f49]" /><i className="size-[3px] rounded-full bg-[#e01f49]" /><i className="size-[3px] rounded-full bg-[#e01f49]" />
          </div>
        </aside>
        <div className="w-[1879px] flex flex-col">
          <header className="flex h-[31px] bg-[linear-gradient(180deg,#060608,#0b0b0d_50%,#060608)]">
            <div className="w-[197px] h-full bg-[#121117] border-t border-r border-[#fa1e4e] rounded-tl-md flex items-center pl-[6px]">
              <div className={`size-4 shrink-0 bg-[#4679bb] text-white text-[11px] leading-4 text-center ${UI}`}>R</div>
              <div className={`ml-[3px] w-[145px] shrink-0 text-xs tracking-[-0.45px] whitespace-nowrap overflow-hidden text-transparent bg-clip-text bg-[linear-gradient(90deg,#fff_85%,#444_98%)] ${UI}`}>Online regex tester and deb</div>
              <Close className="size-[11px] ml-[6px] text-white" />
            </div>
            <div className="flex-1 flex flex-col">
              <div className="h-[30px] flex items-center text-[#fa1e4e]">
                <Svg className="size-[11px] ml-[9px]" sw={2}><path d="M12 0v24M0 12h24" /></Svg>
                <div className="ml-auto flex pr-[13px] gap-[26px]">
                  <Search className="size-[15px] -mt-[3px]" />
                  <Minimize className="size-[13px] ml-[-1px] mt-0" />
                  <Restore className="size-[14px]" />
                  <Close className="size-[13px]" />
                </div>
              </div>
              <div className="h-px bg-[linear-gradient(90deg,#fa1e4e,#fa1e4e_10%,transparent_48%)]" />
            </div>
          </header>
          <nav className="h-[39px] bg-[#121117] flex items-center text-[#e4e4e6]">
            <Back className="size-[15px] ml-2 text-[#5a5a60]" />
            <Forward className="size-[15px] ml-[19px] text-[#5a5a60]" />
            <Reload className="size-[15px] ml-[17px]" />
            <Dots className="size-[14px] ml-[9px]" />
            <Lock className="size-[14px] ml-[10px]" />
            <div className={`ml-[18px] text-[13px] text-white ${UI}`}>regex101.com</div>
            <div className="ml-auto flex items-center pr-[12px]">
              <Camera className="size-[15px]" />
              <Shield className="size-[16px] ml-[10px]" />
              <HeartLine className="size-[15px] ml-[11px]" />
              <Dots className="size-[13px] ml-[3px]" />
              <Sliders className="size-[13px] ml-[8px]" />
            </div>
          </nav>
          <div className="h-[49px] bg-[#477bbb] flex items-center justify-between pl-[10px] pr-[10px] font-['Open_Sans',sans-serif] text-white">
            <div className="flex items-baseline font-light text-[20px] tracking-[-1.38px] whitespace-nowrap">
              regular<span className="ml-[4px] text-[#a8dcff]">expressions</span><span className="ml-[5px] text-[10px] font-semibold tracking-[-1.2px]">101</span>
            </div>
            <div className="flex items-center text-[12.8px] whitespace-nowrap gap-[10px] pt-[3px]">
              {LINKS.map(([Icon, label, tone, w]) => (
                <span key={label} className="flex items-center gap-1"><Icon className={`${w} h-[14px] ${tone}`} />{label}</span>
              ))}
            </div>
          </div>
          <div className="flex h-[921px] font-['Open_Sans',sans-serif]">
            <div className="w-[50px] bg-[#e0e0e0] flex flex-col items-center gap-[10px] pt-[11px] pb-[10px]">
              <Round Icon={FaCode} dark /><Round Icon={FaBook} /><Round Icon={FaUser} />
              <Round Icon={FaGamepad} /><Round Icon={FaWrench} /><Round Icon={FaComments} />
              <div className="mt-auto flex flex-col gap-4"><Round Icon={FaDollarSign} /><Round Icon={FaHeart} /></div>
            </div>
            <div className="w-[220px] bg-[#f7f7f7] border-r border-white pl-[10px] pr-[10px] flex flex-col">
              <Menu title="SAVE & SHARE" items={[{ Icon: FaRegSave, label: "Save Regex", save: true }]} />
              <Menu title="FLAVOR" items={[
                { Icon: FaCode, label: "PCRE (PHP)" }, { Icon: FaCode, label: "ECMAScript (JavaScript)" },
                { Icon: FaCode, label: "Python", on: true }, { Icon: FaCode, label: "Golang" }]} />
              <Menu title="FUNCTION" items={[
                { Icon: FaStar, label: "Match", on: true }, { Icon: FaCut, label: "Substitution" }, { Icon: FaListUl, label: "Unit Tests" }]} />
              <Menu title="TOOLS" items={[{ Icon: FaRegFileCode, label: "Code Generator" }]} />
              <div className="mt-auto mb-[5px] flex">
                <span className="w-[66px] h-5 rounded-[3px] bg-[#4679bb] text-white text-center text-[11.3px] leading-5 font-bold">SPONSOR</span>
                <span className="flex-1 h-[15px] border-b border-[#e0e0e0]" />
              </div>
            </div>
            <div className="w-[966px] bg-[#eaeaea] pl-[10px] pr-[11px] shadow-[inset_0_4px_6px_rgba(0,0,0,0.06),inset_-4px_0_6px_rgba(0,0,0,0.04)]">
              <div className="flex h-8">
                <Heading className="flex-1 h-8 pt-[7px] border-[#d8d8d8]">REGULAR EXPRESSION</Heading>
                <span className="w-[151px] h-[22px] mt-[11px] rounded-[3px] bg-[#5a9280] text-white text-[11.1px] leading-[22px] text-center whitespace-nowrap">2 matches, 10 steps (~0ms)</span>
              </div>
              <div className={`mt-2 h-[37px] bg-white border border-[#b9b9b9] rounded-[3px] shadow-[inset_0_1px_2px_rgba(0,0,0,0.1)] flex items-center pl-[9px] pr-[11px] text-[13px] ${MONO}`}>
                <FaEllipsisV className="w-3 h-3 text-[#c4c4c4]" />
                <span className="w-[20px] text-[#bbb]">r"</span>
                <span className="h-[17px] leading-[17px] flex bg-[#ffc07a] text-[#7a4a10] tracking-[0.92px]">
                  <span className="bg-[#de9d5c]">[^</span>abcde<span className="bg-[#de9d5c]">]</span>
                </span>
                <span className="ml-auto text-[#bbb]">"</span><span className="ml-[2px] text-[#6b8a76]">gm</span>
                <FaFlag className="ml-[3px] w-[14px] h-3 text-[#c4c4c4]" />
              </div>
              <Heading className="h-[31px] pt-[6px] border-[#d8d8d8]">TEST STRING</Heading>
              <div className={`mt-[7px] h-[796px] bg-white border border-[#4679bb] rounded-[3px] shadow-[0_0_4px_rgba(70,121,187,0.3)] pl-[5px] pt-[7px] text-[13px] tracking-[0.74px] text-[#444] ${MONO}`}>
                <div className="flex h-5 leading-5">abcde<span className="bg-[#c6e3ff]">f</span><span className="bg-[#6fc1ff]">g</span><span className="w-px bg-black" /></div>
              </div>
            </div>
            <RightColumn />
          </div>
        </div>
      </div>
      <footer className="h-10 flex justify-between bg-[#211f1f]">
        <TaskIcons />
        <div className={`w-[66px] text-center text-[11.5px] leading-[18px] pt-[2px] tracking-[-0.2px] text-white ${UI}`}><div>09:45</div><div>22-10-2020</div></div>
      </footer>
    </section>
  );
}

export default function App() {
  return (
    <main className="w-[3840px] h-[1080px] flex overflow-hidden bg-black">
      <LeftMonitor />
      <RightMonitor />
    </main>
  );
}
